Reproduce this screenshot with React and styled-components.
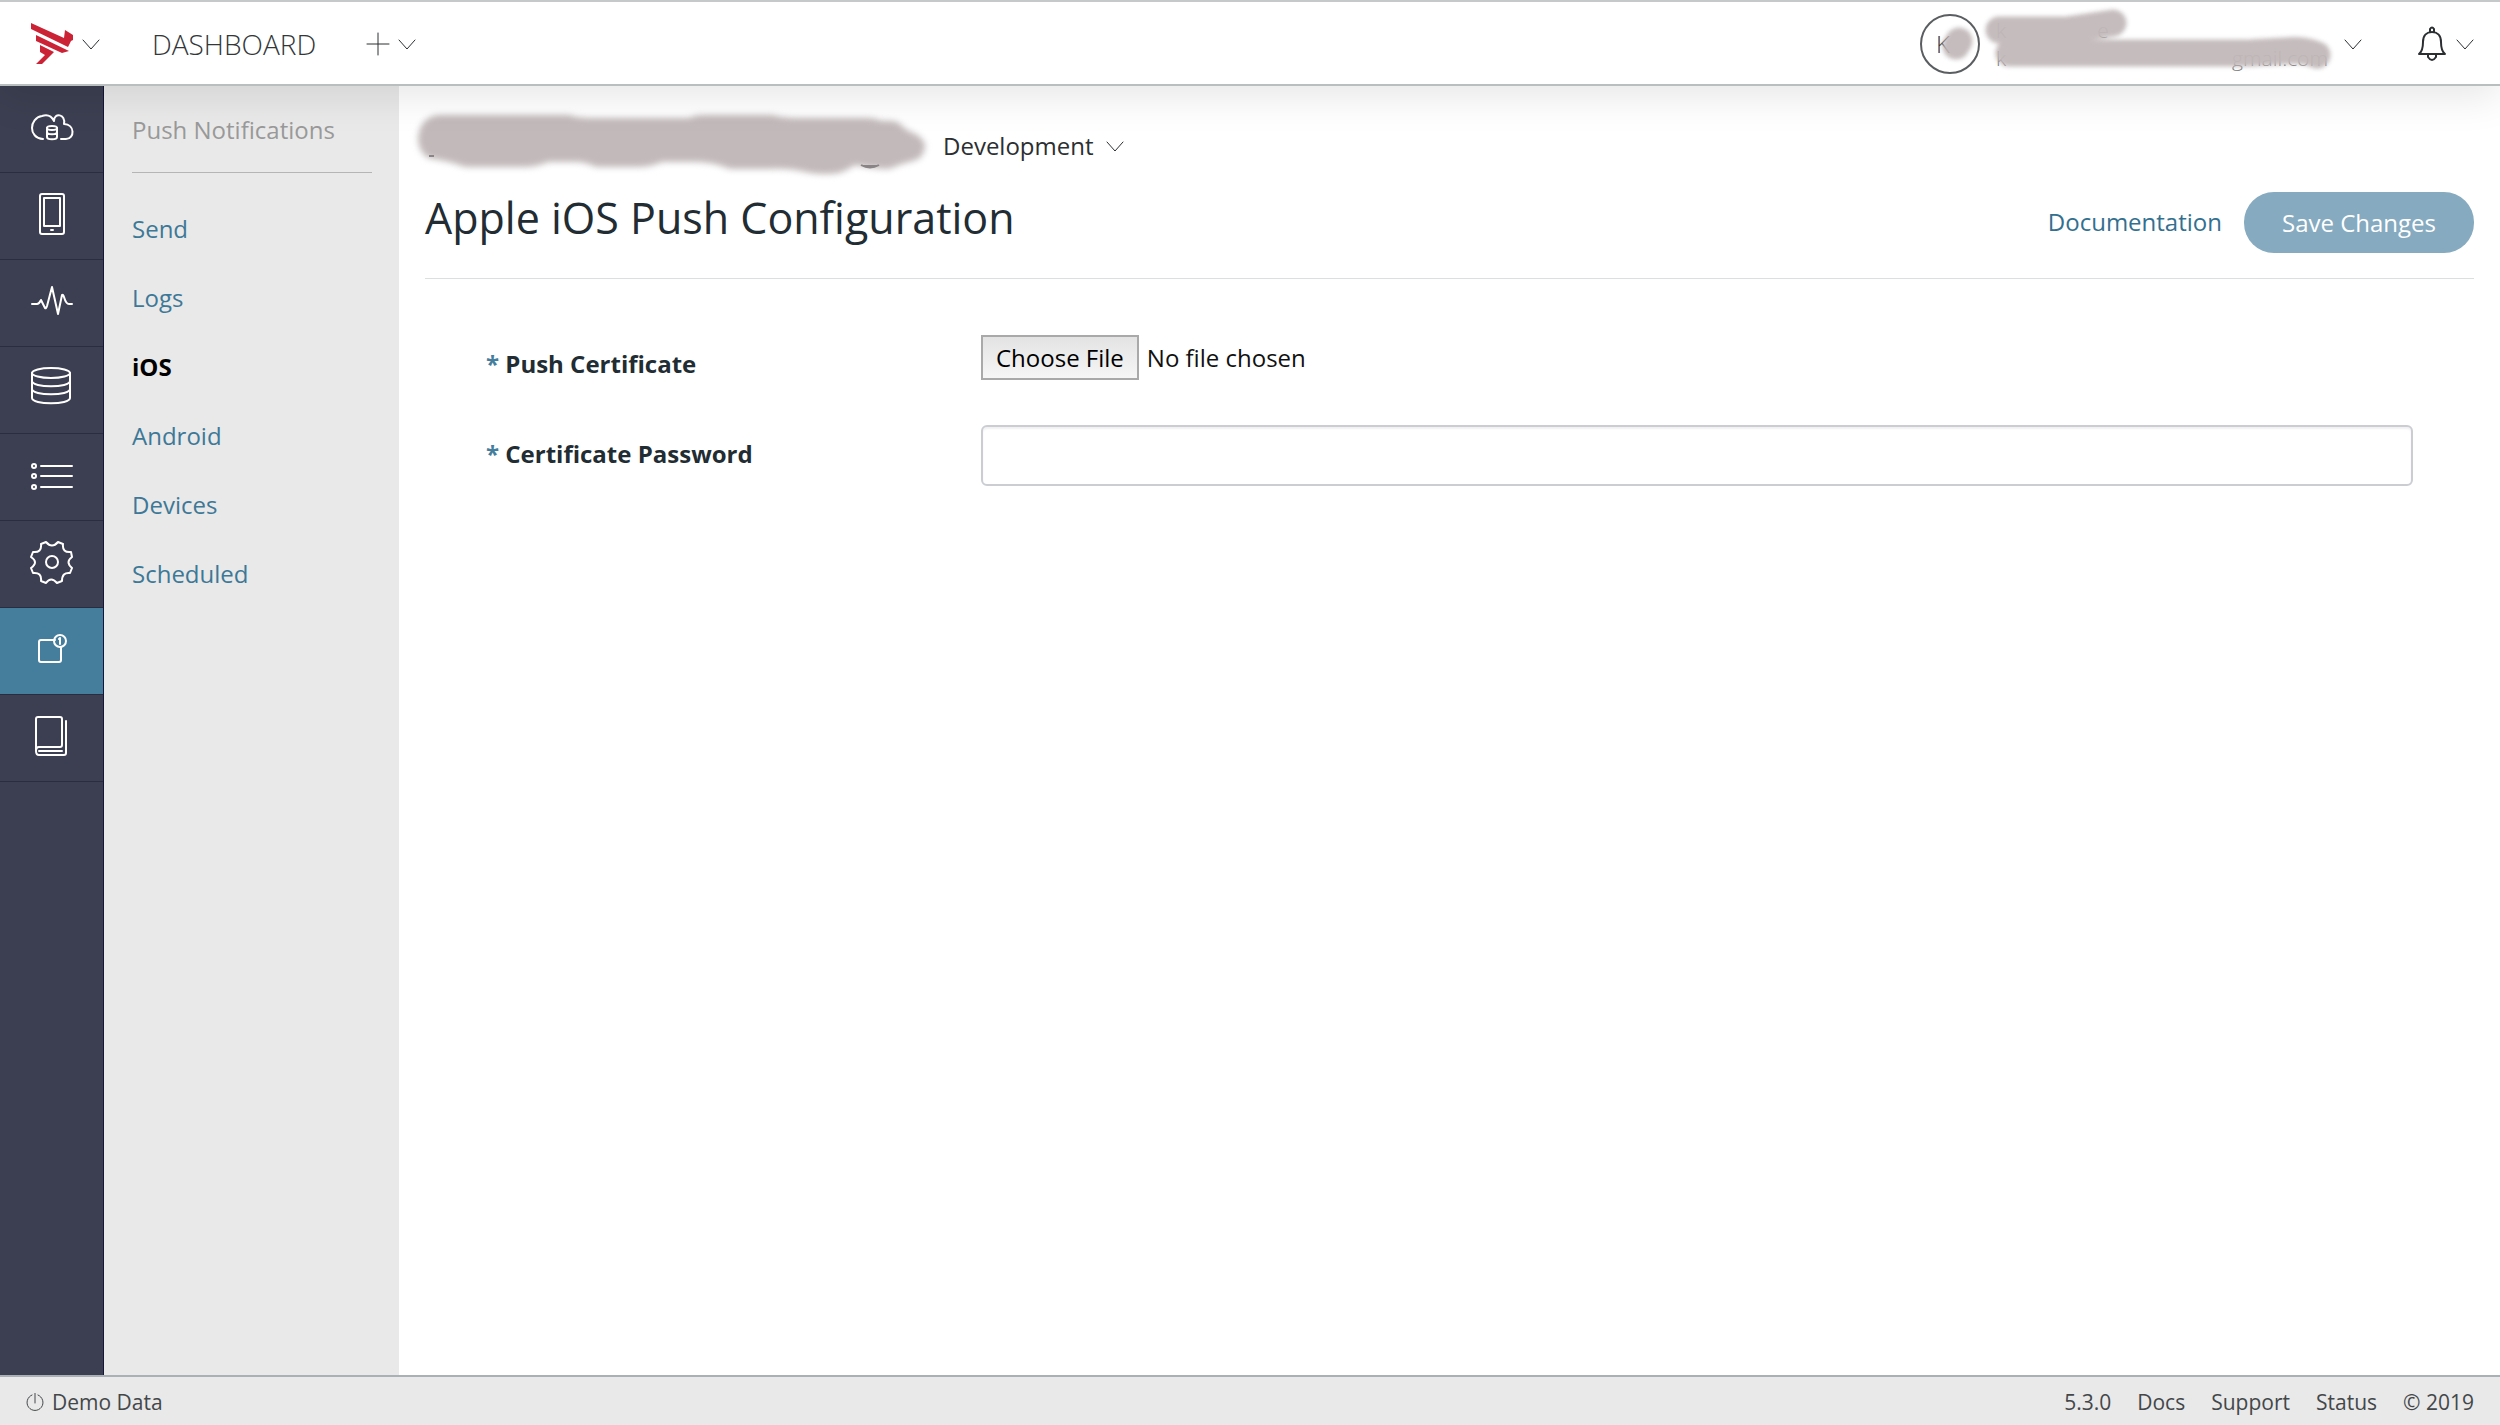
import React from 'react'
import styled, { createGlobalStyle } from 'styled-components'

const GlobalStyle = createGlobalStyle`
  * {
    box-sizing: border-box;
  }

  body {
    margin: 0;
    background: #fff;
    color: #222c33;
    font-family: 'Open Sans', 'Noto Sans', sans-serif;
    font-size: 24px;
    line-height: 36px;
  }

  a {
    text-decoration: none;
  }
`

const Page = styled.div`
  display: flex;
  flex-direction: column;
  min-height: 100vh;
`

const TopBar = styled.header`
  position: relative;
  z-index: 1;
  display: flex;
  align-items: center;
  height: 86px;
  padding: 2px 26px 0 30px;
  background: #fff;
  border-top: 2px solid #c6c9c9;
  border-bottom: 2px solid #b9bfbf;
  box-shadow: 0 10px 40px rgba(0, 0, 0, 0.1);
`

const IconButton = styled.button`
  display: flex;
  align-items: center;
  gap: ${(p) => p.$gap || 8}px;
  padding: 0;
  border: 0;
  background: none;
  color: #2b2f32;
  font: inherit;
  cursor: pointer;
`

const DashboardLink = styled.a`
  margin: 0 50px 0 52px;
  color: #33373a;
  font-size: 28px;
  font-weight: 300;
`

const Account = styled.div`
  display: flex;
  align-items: center;
  gap: 56px;
  margin-left: auto;
`

const Avatar = styled.span`
  position: relative;
  display: flex;
  align-items: center;
  width: 60px;
  height: 60px;
  padding-left: 14px;
  border: 2px solid #5a5e60;
  border-radius: 50%;
  font-weight: 300;
`

const UserInfo = styled.span`
  position: relative;
  display: flex;
  flex-direction: column;
  width: 332px;
  color: #777;
  font-size: 21px;
  font-weight: 300;
  line-height: 28px;
`

const UserLine = styled.span`
  display: flex;
  justify-content: space-between;
  width: ${(p) => p.$width};
`

const Cover = styled.svg`
  position: absolute;
  top: 0;
  left: 0;
  overflow: visible;
  fill: none;
  stroke: #c2b9ba;
  stroke-width: 27;
  stroke-linecap: round;
  stroke-linejoin: round;
  opacity: 0.95;
  filter: blur(2px);
`

const Body = styled.div`
  display: flex;
  flex: 1;
`

const Rail = styled.nav`
  width: 104px;
  background: #3c3f51;
  border-right: 1px solid #14163a;
`

const RailLink = styled.a`
  display: flex;
  align-items: center;
  justify-content: center;
  height: 87px;
  padding-bottom: 4px;
  border-bottom: 1px solid #2a2d40;
  background: ${(p) => (p.$active ? '#457e9c' : 'transparent')};
  color: #fff;
`

const SideMenu = styled.nav`
  width: 295px;
  padding: 26px 27px 26px 28px;
  background: #e9e9e9;
`

const SideTitle = styled.h2`
  margin: 0 0 38px;
  padding-bottom: 24px;
  border-bottom: 1px solid #b5b5b5;
  color: #999;
  font-size: 24px;
  font-weight: 400;
`

const SideList = styled.ul`
  display: grid;
  gap: 33px;
  margin: 0;
  padding: 0;
  list-style: none;
`

const SideLink = styled.a`
  color: ${(p) => (p.$active ? '#000' : '#3d7897')};
  font-weight: ${(p) => (p.$active ? 700 : 400)};
`

const Main = styled.main`
  flex: 1;
  padding: 29px 26px;
`

const AppRow = styled.div`
  display: flex;
  align-items: center;
  gap: 16px;
  height: 62px;
`

const AppName = styled.svg`
  overflow: visible;

  path:first-child {
    filter: blur(3px);
  }
`

const TitleRow = styled.div`
  display: flex;
  align-items: flex-end;
  padding: 11px 0 25px;
  border-bottom: 1px solid #dcdfe0;
`

const Title = styled.h1`
  flex: 1;
  margin: 0 0 5px;
  font-size: 43px;
  font-weight: 400;
  line-height: 60px;
`

const DocLink = styled.a`
  margin-right: 22px;
  color: #33708f;
  line-height: 62px;
`

const SaveButton = styled.button`
  height: 61px;
  padding: 0 38px;
  border: 0;
  border-radius: 30px;
  background: #86aabf;
  color: #fff;
  font: inherit;
`

const Form = styled.form`
  display: grid;
  gap: 43px;
  padding: 56px 61px;
`

const Field = styled.div`
  display: flex;
  align-items: flex-start;
`

const Label = styled.label`
  width: 495px;
  padding-top: 11px;
  font-weight: 700;

  span {
    color: #457e9c;
  }
`

const FileInput = styled.input`
  flex: 1;
  height: 45px;
  color: #111;
  font: inherit;

  &::file-selector-button {
    height: 45px;
    margin-right: 8px;
    padding: 0 13px;
    border: 2px solid #a9a9a9;
    border-radius: 0;
    background: linear-gradient(#e3e3e3, #f6f6f6);
    color: #000;
    font: inherit;
  }
`

const TextInput = styled.input`
  flex: 1;
  height: 61px;
  padding: 0 16px;
  border: 2px solid #cbcdd2;
  border-radius: 6px;
  box-shadow: inset 0 2px 2px rgba(0, 0, 0, 0.06);
  font: inherit;
`

const Footer = styled.footer`
  display: flex;
  align-items: center;
  gap: 26px;
  height: 50px;
  padding: 2px 26px 0;
  border-top: 2px solid #a9b1b6;
  background: #e9e9e9;
  color: #43474a;
  font-size: 21px;

  a {
    color: inherit;
  }
`

const DemoData = styled.span`
  display: flex;
  align-items: center;
  gap: 8px;
  margin-right: auto;
`

const Line = styled.svg`
  display: block;
  fill: none;
  stroke: currentColor;
  stroke-width: ${(p) => p.$weight || 2};
  stroke-linecap: round;
  stroke-linejoin: round;
`

const Chevron = () => (
  <Line width="18" height="12" viewBox="0 0 18 12" $weight={1}>
    <path d="M1 2l8 9 8-9" />
  </Line>
)

const Logo = () => (
  <svg width="44" height="42" viewBox="0 0 44 42" fill="#cb2335">
    <path d="M1 0L34 15L35 7L43 12V17L41 18L38 24L1 6Z" />
    <path d="M6 12L39 28L32 30L6 18Z" />
    <path d="M10 22L24 29L12 41H6L15 32L10 29Z" />
  </svg>
)

const icons = {
  cloud: (
    <Line width="44" height="44" viewBox="0 0 44 44">
      <path d="M13 34C-2 33-1 13 12 11C18 9 22 12 24 16C24 7 36 9 34 19C45 19 45 34 36 34H31" />
      <ellipse cx="22" cy="23" rx="5" ry="2" />
      <path d="M17 23v9c0 3 10 3 10 0v-9M17 27c0 3 10 3 10 0" />
    </Line>
  ),
  phone: (
    <Line width="44" height="44" viewBox="0 0 44 44">
      <rect x="10" y="2" width="24" height="40" rx="2" />
      <path d="M14 6h16v28H14zM21 38h2" />
    </Line>
  ),
  pulse: (
    <Line width="44" height="44" viewBox="0 0 44 44">
      <path d="M2 25h5q2 0 4-4l4 8q1 1 2-2l5-19 6 27 4-19q1-1 2 2 2 7 5 7h3" />
    </Line>
  ),
  database: (
    <Line width="44" height="44" viewBox="0 0 44 44">
      <ellipse cx="21" cy="7" rx="19" ry="5" />
      <path d="M2 7v25c0 7 38 7 38 0V7M2 15c0 7 38 7 38 0M2 23c0 7 38 7 38 0" />
    </Line>
  ),
  list: (
    <Line width="44" height="44" viewBox="0 0 44 44">
      <path d="M11 13h31M11 23h31M11 34h31" />
      <circle cx="4" cy="13" r="2" />
      <circle cx="4" cy="23" r="2" />
      <circle cx="4" cy="34" r="2" />
    </Line>
  ),
  gear: (
    <Line width="44" height="44" viewBox="0 0 44 44">
      <path d="M16 2q6 7 12 0l5 2q-1 9 8 8l1 5q-7 5 0 11l-2 5q-8-1-8 8l-5 2q-6-7-11 0l-5-2q1-9-8-8l-2-5q8-6 0-11l2-5q9 1 8-8z" />
      <circle cx="22" cy="22" r="6" />
    </Line>
  ),
  push: (
    <Line width="44" height="44" viewBox="0 0 44 44">
      <path d="M25 13H11q-2 0-2 2v18q0 2 2 2h18q2 0 2-2V20" />
      <circle cx="30" cy="14" r="6" />
      <path d="M29 12l1-1v6" />
    </Line>
  ),
  book: (
    <Line width="44" height="44" viewBox="0 0 44 44">
      <path d="M6 37V5q0-2 2-2h22q2 0 2 2v26q0 2-2 2H9q-3 0-3 4t3 4h25q2 0 2-2V7M9 37h23" />
    </Line>
  ),
}

const Bell = () => (
  <Line width="28" height="36" viewBox="0 0 28 36">
    <path d="M1 28q4-3 4-12c0-7 4-10 9-10s9 3 9 10q0 9 4 12zM12 6V3q2-3 4 0v3M10 28v3q4 6 8 0v-3" />
  </Line>
)

const Power = () => (
  <Line width="18" height="18" viewBox="0 0 18 18" $weight={1}>
    <path d="M6 2a8 8 0 1 0 6 0M9 0v10" />
  </Line>
)

const railItems = ['cloud', 'phone', 'pulse', 'database', 'list', 'gear', 'push', 'book']
const menuItems = ['Send', 'Logs', 'iOS', 'Android', 'Devices', 'Scheduled']
const footerLinks = ['Docs', 'Support', 'Status']

const App = () => (
  <Page>
    <GlobalStyle />
    <TopBar>
      <IconButton aria-label="Products">
        <Logo />
        <Chevron />
      </IconButton>
      <DashboardLink href="#">DASHBOARD</DashboardLink>
      <IconButton aria-label="Create">
        <Line width="24" height="24" viewBox="0 0 24 24" $weight={1}>
          <path d="M1 12h22M12 1v22" />
        </Line>
        <Chevron />
      </IconButton>
      <Account>
        <IconButton aria-label="Account" $gap={16}>
          <Avatar>
            K
            <Cover width="56" height="56" viewBox="0 0 56 56">
              <path d="M34 30l3-5" />
            </Cover>
          </Avatar>
          <UserInfo>
            <UserLine $width="34%">
              <span>k</span>
              <span>e</span>
            </UserLine>
            <UserLine $width="100%">
              <span>k</span>
              <span>gmail.com</span>
            </UserLine>
            <Cover width="332" height="56" viewBox="0 0 332 56">
              <path d="M3 14h67l47-7" />
              <path d="M13 37h240l35-2q20-2 33 4" />
            </Cover>
          </UserInfo>
          <Chevron />
        </IconButton>
        <IconButton aria-label="Notifications" $gap={10}>
          <Bell />
          <Chevron />
        </IconButton>
      </Account>
    </TopBar>
    <Body>
      <Rail>
        {railItems.map((name) => (
          <RailLink key={name} href="#" aria-label={name} $active={name === 'push'}>
            {icons[name]}
          </RailLink>
        ))}
      </Rail>
      <SideMenu>
        <SideTitle>Push Notifications</SideTitle>
        <SideList>
          {menuItems.map((item) => (
            <li key={item}>
              <SideLink href="#" $active={item === 'iOS'}>
                {item}
              </SideLink>
            </li>
          ))}
        </SideList>
      </SideMenu>
      <Main>
        <AppRow>
          <AppName width="502" height="62" viewBox="0 0 502 62">
            <path
              fill="#c2b9ba"
              d="M-7 23Q-5 2 14 0H144Q152 3 161 3H264Q270 0 278 0H347Q358 3 368 3H443Q450 3 457 6Q468 5 474 8Q481 16 491 19Q500 25 500 31Q499 42 491 45Q478 48 464 54Q448 54 430 50Q416 60 402 59Q388 59 381 57Q364 53 347 54H305Q288 47 271 47H237Q226 52 213 52H171Q160 47 151 47H123Q112 52 99 52H40Q24 46 3 43Q-7 36-7 23Z"
            />
            <path d="M436 50q9 5 18 0M4 41h5" fill="#8a8486" stroke="#8a8486" strokeWidth="2" />
          </AppName>
          <IconButton $gap={12}>
            Development
            <Chevron />
          </IconButton>
        </AppRow>
        <TitleRow>
          <Title>Apple iOS Push Configuration</Title>
          <DocLink href="#">Documentation</DocLink>
          <SaveButton>Save Changes</SaveButton>
        </TitleRow>
        <Form>
          <Field>
            <Label htmlFor="certificate">
              <span>*</span> Push Certificate
            </Label>
            <FileInput id="certificate" type="file" />
          </Field>
          <Field>
            <Label htmlFor="password">
              <span>*</span> Certificate Password
            </Label>
            <TextInput id="password" type="password" />
          </Field>
        </Form>
      </Main>
    </Body>
    <Footer>
      <DemoData>
        <Power />
        Demo Data
      </DemoData>
      <span>5.3.0</span>
      {footerLinks.map((link) => (
        <a key={link} href="#">
          {link}
        </a>
      ))}
      <span>© 2019</span>
    </Footer>
  </Page>
)

export default App
